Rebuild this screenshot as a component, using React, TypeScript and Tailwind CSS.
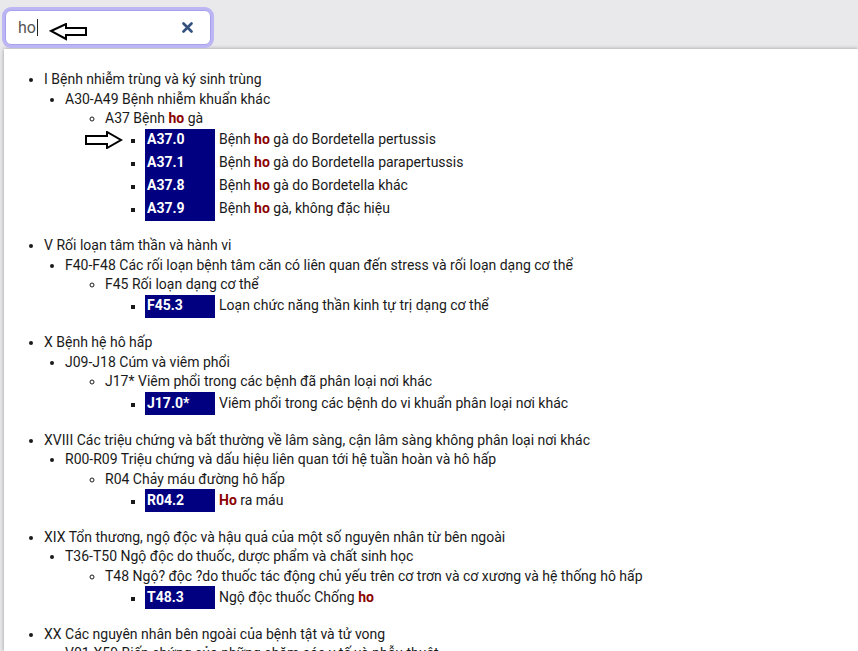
import type { ReactNode } from 'react'

type Code = { code: string; text: ReactNode }
type Group = {
  chapter: string
  block: string
  category: ReactNode
  codes: Code[]
}

const Hl = ({ children }: { children: ReactNode }) => (
  <span className="font-bold text-[#8b0000]">{children}</span>
)

const GROUPS: Group[] = [
  {
    chapter: 'I Bệnh nhiễm trùng và ký sinh trùng',
    block: 'A30-A49 Bệnh nhiễm khuẩn khác',
    category: <>A37 Bệnh <Hl>ho</Hl> gà</>,
    codes: [
      { code: 'A37.0', text: <>Bệnh <Hl>ho</Hl> gà do Bordetella pertussis</> },
      { code: 'A37.1', text: <>Bệnh <Hl>ho</Hl> gà do Bordetella parapertussis</> },
      { code: 'A37.8', text: <>Bệnh <Hl>ho</Hl> gà do Bordetella khác</> },
      { code: 'A37.9', text: <>Bệnh <Hl>ho</Hl> gà, không đặc hiệu</> },
    ],
  },
  {
    chapter: 'V Rối loạn tâm thần và hành vi',
    block: 'F40-F48 Các rối loạn bệnh tâm căn có liên quan đến stress và rối loạn dạng cơ thể',
    category: 'F45 Rối loạn dạng cơ thể',
    codes: [{ code: 'F45.3', text: 'Loạn chức năng thần kinh tự trị dạng cơ thể' }],
  },
  {
    chapter: 'X Bệnh hệ hô hấp',
    block: 'J09-J18 Cúm và viêm phổi',
    category: 'J17* Viêm phổi trong các bệnh đã phân loại nơi khác',
    codes: [{ code: 'J17.0*', text: 'Viêm phổi trong các bệnh do vi khuẩn phân loại nơi khác' }],
  },
  {
    chapter: 'XVIII Các triệu chứng và bất thường về lâm sàng, cận lâm sàng không phân loại nơi khác',
    block: 'R00-R09 Triệu chứng và dấu hiệu liên quan tới hệ tuần hoàn và hô hấp',
    category: 'R04 Chảy máu đường hô hấp',
    codes: [{ code: 'R04.2', text: <><Hl>Ho</Hl> ra máu</> }],
  },
  {
    chapter: 'XIX Tổn thương, ngộ độc và hậu quả của một số nguyên nhân từ bên ngoài',
    block: 'T36-T50 Ngộ độc do thuốc, dược phẩm và chất sinh học',
    category: 'T48 Ngộ? độc ?do thuốc tác động chủ yếu trên cơ trơn và cơ xương và hệ thống hô hấp',
    codes: [{ code: 'T48.3', text: <>Ngộ độc thuốc Chống <Hl>ho</Hl></> }],
  },
]

function SearchBox() {
  return (
    <div className="relative ml-[5px] mt-[10px] flex h-[35px] w-[206px] items-center rounded-[6px] border border-[#a7a1ec] bg-white pl-[12px] pr-[17px] ring-[3px] ring-[#bcb6f4]">
      <span className="text-[16px] leading-none text-[#555]">ho</span>
      <span className="ml-px h-[17px] w-px bg-[#222]" />
      {/* annotation arrow pointing at the typed text */}
      <svg className="absolute left-[43px] top-[12px]" width="40" height="18" viewBox="0 0 40 18">
        <polygon
          points="2,8 17,1 17,5 37,5 37,12 17,12 17,16"
          fill="white"
          stroke="black"
          strokeWidth="2"
        />
      </svg>
      <svg className="ml-auto" width="11" height="11" viewBox="0 0 11 11">
        <path d="M1.5 1.5 L9.5 9.5 M9.5 1.5 L1.5 9.5" stroke="#34507f" strokeWidth="2.6" strokeLinecap="round" />
      </svg>
    </div>
  )
}

function CodeRow({ code, text, arrow }: Code & { arrow?: boolean }) {
  return (
    <li className="relative h-[23px] marker:text-[12px]">
      {arrow && (
        <svg className="absolute left-[-60px] top-[2px]" width="38" height="18" viewBox="0 0 38 18">
          <polygon
            points="1,5 22,5 22,1 36,9 22,17 22,13 1,13"
            fill="white"
            stroke="black"
            strokeWidth="2"
          />
        </svg>
      )}
      <div className="flex h-[23px] items-center">
        <span className="flex h-[23px] w-[70px] shrink-0 items-center bg-[#000080] pl-[2px] font-bold text-white">
          {code}
        </span>
        <span className="ml-[4px] whitespace-nowrap">{text}</span>
      </div>
    </li>
  )
}

export default function App() {
  return (
    <div className="flex h-[651px] w-[858px] flex-col overflow-hidden bg-[#e9e9eb] font-['Roboto',sans-serif]">
      <div className="h-[49px] shrink-0">
        <SearchBox />
      </div>
      <div className="ml-[4px] flex-1 overflow-hidden bg-white text-[14px] leading-[19.5px] text-[#1a1a1a] shadow-[0_0_4px_rgba(0,0,0,0.35)]">
        <ul className="list-disc pl-[40px] pt-[21px]">
          {GROUPS.map((g, gi) => (
            <li key={gi} className="mb-[15.7px] whitespace-nowrap">
              {g.chapter}
              <ul className="list-disc pl-[21px]">
                <li>
                  {g.block}
                  <ul className="list-[circle] pl-[40px]">
                    <li>
                      {g.category}
                      <ul className="list-[square] pl-[40px]">
                        {g.codes.map((c, ci) => (
                          <CodeRow key={c.code} {...c} arrow={gi === 0 && ci === 0} />
                        ))}
                      </ul>
                    </li>
                  </ul>
                </li>
              </ul>
            </li>
          ))}
          <li className="whitespace-nowrap">
            XX Các nguyên nhân bên ngoài của bệnh tật và tử vong
            <ul className="list-disc pl-[21px]">
              <li>V01-X59 Biến chứng của những chăm sóc y tế và phẫu thuật</li>
            </ul>
          </li>
        </ul>
      </div>
    </div>
  )
}
